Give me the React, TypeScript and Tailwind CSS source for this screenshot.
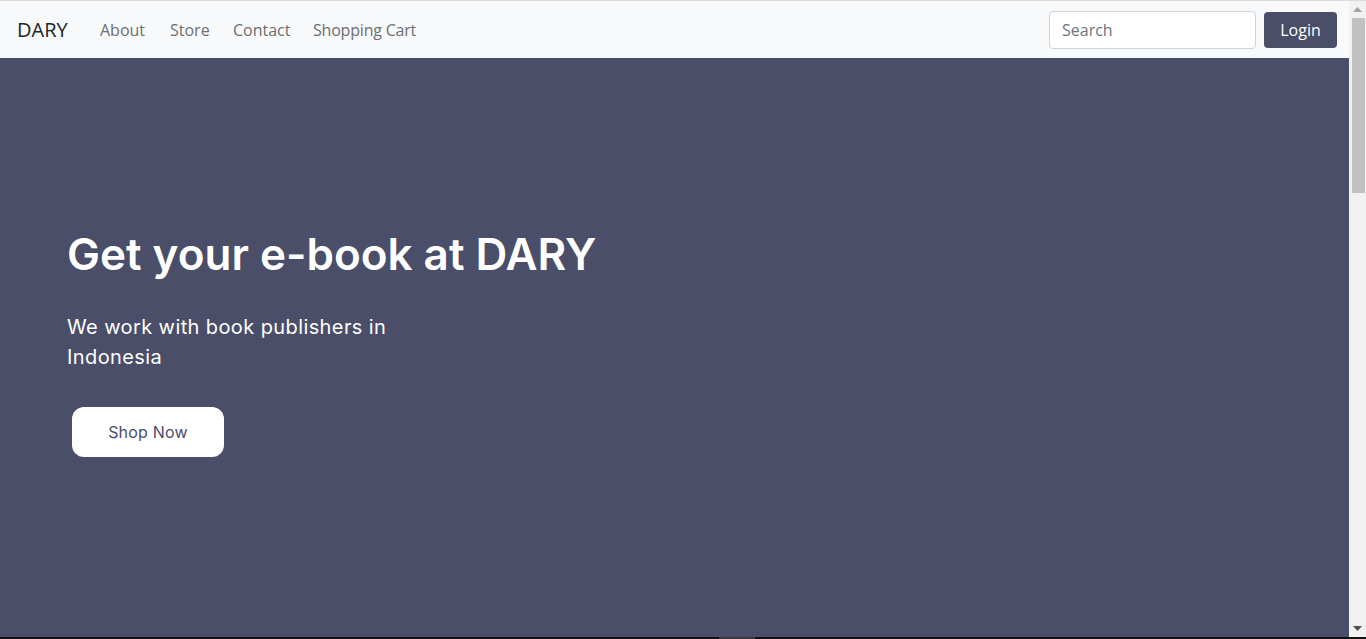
import React from "react";

function Scrollbar() {
  return (
    <div className="w-[17px] bg-[#f1f1f1] flex flex-col items-center">
      <div className="h-[17px] w-full flex items-center justify-center">
        <svg width="9" height="5" viewBox="0 0 9 5"><polygon points="4.5,0 9,5 0,5" fill="#a3a3a3" /></svg>
      </div>
      <div className="w-[13px] h-[175px] bg-[#c1c1c1] ml-[2px]" />
      <div className="flex-1" />
      <div className="h-[17px] w-full flex items-center justify-center">
        <svg width="9" height="5" viewBox="0 0 9 5"><polygon points="0,0 9,0 4.5,5" fill="#505050" /></svg>
      </div>
    </div>
  );
}

export default function App() {
  const ui = { fontFamily: "'Open Sans', 'Noto Sans', sans-serif" };
  return (
    <div className="h-[639px] overflow-hidden flex flex-col bg-[#f1f1f1]">
      <div className="h-[1px] bg-[#dcdcdc]" />
      <div className="flex-1 flex min-h-0">
        <div className="flex-1 flex flex-col min-w-0">
          <nav className="bg-[#f8f9fa] h-[57px] flex items-center px-3" style={ui}>
            <a className="text-[20px] text-[#212529] ml-[5px] w-[83px] leading-[30px]">DARY</a>
            <ul className="flex items-center text-[16px] text-[#6c6f72]">
              <li className="w-[70px] py-2">About</li>
              <li className="w-[63px] py-2">Store</li>
              <li className="w-[80px] py-2">Contact</li>
              <li className="py-2 tracking-[-0.2px]">Shopping Cart</li>
            </ul>
            <div className="ml-auto flex items-center gap-2">
              <input
                placeholder="Search"
                className="w-[207px] h-[38px] border border-[#ced4da] rounded-[4px] bg-white px-3 text-[16px] placeholder-[#6c757d] outline-none"
                style={ui}
              />
              <button className="h-[36px] w-[73px] rounded-[4px] bg-[#4a4e69] text-white text-[16px]" style={ui}>
                Login
              </button>
            </div>
          </nav>
          <section className="flex-1 bg-[#4a4e69] pt-[163px] pl-[67px] text-white" style={{ fontFamily: "Inter, sans-serif" }}>
            <h1 className="text-[44px] font-semibold leading-[66px]">Get your e-book at DARY</h1>
            <p className="mt-[25px] text-[20px] leading-[30px] tracking-[0.4px]">
              We work with book publishers in
              <br />
              Indonesia
            </p>
            <button className="mt-[35px] ml-[5px] w-[152px] h-[50px] rounded-[12px] bg-white text-[#4a4e69] text-[16px] tracking-[0.2px]">
              Shop Now
            </button>
          </section>
        </div>
        <Scrollbar />
      </div>
      <div className="h-[2px] bg-[#111111] flex">
        <div className="ml-[719px] w-[36px] bg-[#3a3a3a]" />
      </div>
    </div>
  );
}
